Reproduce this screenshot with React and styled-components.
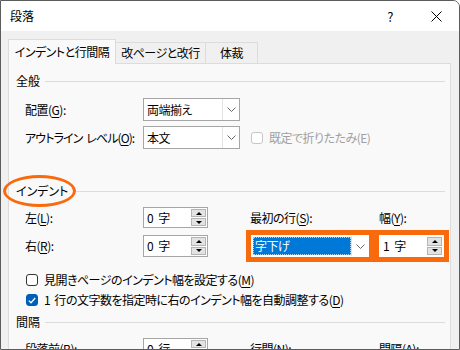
import React from 'react'
import styled, { createGlobalStyle } from 'styled-components'

const ORANGE = '#f86a0c'

const GlobalStyle = createGlobalStyle`
  html, body {
    margin: 0;
    padding: 0;
    background: #fff;
  }
  body {
    width: 460px;
    height: 350px;
    overflow: hidden;
    font-family: "Noto Sans CJK JP", "Noto Sans", sans-serif;
    font-size: 12px;
    letter-spacing: -0.5px;
    word-spacing: 2px;
    color: #000;
    font-feature-settings: "palt";
  }
  u {
    text-underline-offset: 2px;
  }
`

const Window = styled.div`
  width: 460px;
  height: 350px;
  box-sizing: border-box;
  border: 1px solid #5c5c5c;
  border-top-right-radius: 7px;
  background: #f0f0f0;
  overflow: hidden;
  display: flex;
  flex-direction: column;
`

const TitleBar = styled.div`
  flex: none;
  height: 30px;
  background: #fff;
  display: flex;
  align-items: center;
  padding-left: 9px;
`

const Title = styled.div`
  flex: 1;
  line-height: 16px;
  letter-spacing: 0;
`

const TitleButton = styled.div`
  width: 46px;
  height: 30px;
  display: flex;
  align-items: center;
  justify-content: center;
  font-size: 13px;
`

const Body = styled.div`
  flex: 1;
  display: flex;
  flex-direction: column;
  padding: 8px 0 0 7px;
`

const TabRow = styled.div`
  display: flex;
  align-items: flex-end;
  height: 25px;
  margin-bottom: -1px;
  position: relative;
  z-index: 1;
`

const Tab = styled.div`
  box-sizing: border-box;
  width: ${p => p.$width}px;
  height: ${p => (p.$active ? 25 : 21)}px;
  margin-bottom: ${p => (p.$active ? 0 : 1)}px;
  border: 1px solid #dcdcdc;
  border-bottom: none;
  ${p => !p.$active && 'border-left: none;'}
  background: ${p => (p.$active ? '#f9f9f9' : '#f0f0f0')};
  display: flex;
  align-items: center;
  justify-content: center;
  padding-bottom: ${p => (p.$active ? 1 : 0)}px;
  line-height: 16px;
`

const Panel = styled.div`
  flex: 1;
  width: 443px;
  box-sizing: border-box;
  background: #f9f9f9;
  border: 1px solid #dcdcdc;
  border-bottom: none;
  padding: 0 5px 0 6px;
`

const Heading = styled.div`
  position: relative;
  display: flex;
  align-items: center;
  height: 16px;
  line-height: 16px;
  margin-top: ${p => p.$top}px;
  padding-left: 1px;
  letter-spacing: 0;
  &::after {
    content: '';
    flex: 1;
    height: 1px;
    background: #dcdcdc;
    margin-left: 5px;
  }
`

const Ellipse = styled.span`
  position: absolute;
  left: -12px;
  top: -8px;
  width: 73px;
  height: 32px;
  box-sizing: border-box;
  border: 3px solid ${ORANGE};
  border-radius: 50%;
`

const FieldRow = styled.div`
  display: flex;
  align-items: center;
  height: 23px;
  margin-top: ${p => p.$top}px;
  padding-left: 10px;
`

const Label = styled.div`
  flex: none;
  width: ${p => (p.$width ? `${p.$width}px` : 'auto')};
  padding-left: ${p => p.$pad || 0}px;
  line-height: 16px;
  white-space: nowrap;
  letter-spacing: ${p => (p.$tight ? '-0.9px' : 'inherit')};
  color: ${p => (p.$disabled ? '#a0a0a0' : '#000')};
`

const Combo = styled.div`
  display: flex;
  flex: none;
  box-sizing: border-box;
  width: ${p => p.$width}px;
  height: ${p => p.$height}px;
  border: 1px solid ${p => (p.$plain ? '#fff' : '#a6a6a6')};
  background: #fff;
`

const ComboText = styled.div`
  flex: 1;
  display: flex;
  align-items: center;
  padding-left: 3px;
  line-height: 16px;
`

const Selection = styled.div`
  flex: 1;
  align-self: stretch;
  margin: 1px 0 1px -2px;
  padding-left: 2px;
  display: flex;
  align-items: center;
  background: #0078d7;
  color: #fff;
  outline: 1px dotted #a9d2f5;
  outline-offset: -1px;
`

const ComboButton = styled.div`
  width: 16px;
  flex: none;
  border-left: 1px solid #e3e3e3;
  display: flex;
  align-items: center;
  justify-content: center;
`

const Spin = styled.div`
  display: flex;
  flex: none;
  box-sizing: border-box;
  width: 65px;
  height: ${p => p.$height || 21}px;
  border: 1px solid ${p => (p.$plain ? '#fff' : '#a6a6a6')};
  background: #fff;
`

const SpinValue = styled.div`
  flex: 1;
  display: flex;
  align-items: center;
  padding-left: 3px;
  line-height: 16px;
  letter-spacing: 0;
`

const SpinButtons = styled.div`
  width: 15px;
  display: flex;
  flex-direction: column;
  gap: 1px;
  padding: 1px 1px 1px 0;
`

const SpinButton = styled.div`
  flex: 1;
  box-sizing: border-box;
  border: 1px solid #b4b4b4;
  background: #e3e3e3;
  display: flex;
  align-items: center;
  justify-content: center;
  &::before {
    content: '';
    border-left: 3px solid transparent;
    border-right: 3px solid transparent;
    ${p => (p.$down ? 'border-top: 3px solid #000;' : 'border-bottom: 3px solid #000;')}
  }
`

const Highlight = styled.div`
  display: flex;
  border: 5px solid ${ORANGE};
  justify-self: start;
`

const Grid = styled.div`
  display: grid;
  grid-template-columns: 128px 65px 38px 128px 75px;
  grid-template-rows: ${p => p.$rows};
  row-gap: 2px;
  align-items: center;
  margin-top: ${p => p.$top}px;
`

const CheckRow = styled.div`
  display: flex;
  align-items: center;
  gap: 6px;
  height: 16px;
  margin-top: ${p => p.$top}px;
  margin-left: ${p => p.$left || 11}px;
  line-height: 16px;
  white-space: nowrap;
  color: ${p => (p.$disabled ? '#a0a0a0' : '#000')};
`

const Box = styled.span`
  flex: none;
  width: 12px;
  height: 12px;
  box-sizing: border-box;
  border-radius: 3px;
  border: 1px solid ${p => (p.$checked ? '#005fb8' : p.$disabled ? '#c6c6c6' : '#333')};
  background: ${p => (p.$checked ? '#005fb8' : '#fff')};
  display: flex;
  align-items: center;
  justify-content: center;
`

const Chevron = () => (
  <svg width="9" height="5" viewBox="0 0 9 5">
    <polyline points="0.5,0.5 4.5,4.5 8.5,0.5" fill="none" stroke="#666" strokeWidth="1" />
  </svg>
)

const CloseIcon = () => (
  <svg width="11" height="11" viewBox="0 0 11 11">
    <path d="M0.5 0.5 L10.5 10.5 M10.5 0.5 L0.5 10.5" stroke="#000" strokeWidth="1" />
  </svg>
)

const Check = () => (
  <svg width="8" height="7" viewBox="0 0 8 7">
    <polyline points="0.8,3.6 3,5.8 7.2,1" fill="none" stroke="#fff" strokeWidth="1.3" />
  </svg>
)

const Select = ({ value, width, height = 23, selected, plain }) => (
  <Combo $width={width} $height={height} $plain={plain}>
    <ComboText>{selected ? <Selection>{value}</Selection> : value}</ComboText>
    <ComboButton>
      <Chevron />
    </ComboButton>
  </Combo>
)

const Spinner = ({ value, height, plain }) => (
  <Spin $height={height} $plain={plain}>
    <SpinValue>{value}</SpinValue>
    <SpinButtons>
      <SpinButton />
      <SpinButton $down />
    </SpinButtons>
  </Spin>
)

const CheckOption = ({ checked, disabled, top, left, children }) => (
  <CheckRow $top={top} $left={left} $disabled={disabled}>
    <Box $checked={checked} $disabled={disabled}>
      {checked && <Check />}
    </Box>
    <span>{children}</span>
  </CheckRow>
)

const App = () => (
  <>
    <GlobalStyle />
    <Window>
      <TitleBar>
        <Title>段落</Title>
        <TitleButton>?</TitleButton>
        <TitleButton>
          <CloseIcon />
        </TitleButton>
      </TitleBar>
      <Body>
        <TabRow>
          <Tab $active $width={108}>インデントと行間隔</Tab>
          <Tab $width={90}>改ページと改行</Tab>
          <Tab $width={52}>体裁</Tab>
        </TabRow>
        <Panel>
          <Heading $top={9}>全般</Heading>
          <FieldRow $top={9}>
            <Label $width={118}>
              配置(<u>G</u>):
            </Label>
            <Select value="両端揃え" width={97} />
          </FieldRow>
          <FieldRow $top={5}>
            <Label $width={118} $tight>
              アウトライン レベル(<u>O</u>):
            </Label>
            <Select value="本文" width={97} />
            <CheckOption top={0} left={11} disabled>
              既定で折りたたみ(E)
            </CheckOption>
          </FieldRow>

          <Heading $top={34}>
            <Ellipse />
            インデント
          </Heading>
          <Grid $top={8} $rows="21px 32px">
            <Label $pad={10}>
              左(<u>L</u>):
            </Label>
            <Spinner value="0 字" />
            <span />
            <Label $pad={4}>
              最初の行(<u>S</u>):
            </Label>
            <Label $pad={5}>
              幅(<u>Y</u>):
            </Label>
            <Label $pad={10}>
              右(<u>R</u>):
            </Label>
            <Spinner value="0 字" height={22} />
            <span />
            <Highlight>
              <Select value="字下げ" width={118} height={22} selected plain />
            </Highlight>
            <Highlight>
              <Spinner value="1 字" height={22} plain />
            </Highlight>
          </Grid>
          <CheckOption top={10}>
            見開きページのインデント幅を設定する(<u>M</u>)
          </CheckOption>
          <CheckOption top={4} checked>
            1 行の文字数を指定時に右のインデント幅を自動調整する(<u>D</u>)
          </CheckOption>

          <Heading $top={6}>間隔</Heading>
          <Grid $top={8} $rows="21px">
            <Label $pad={10}>
              段落前(<u>B</u>):
            </Label>
            <Spinner value="0 行" />
            <span />
            <Label $pad={4}>
              行間(<u>N</u>):
            </Label>
            <Label $pad={5}>
              間隔(<u>A</u>):
            </Label>
          </Grid>
        </Panel>
      </Body>
    </Window>
  </>
)

export default App
